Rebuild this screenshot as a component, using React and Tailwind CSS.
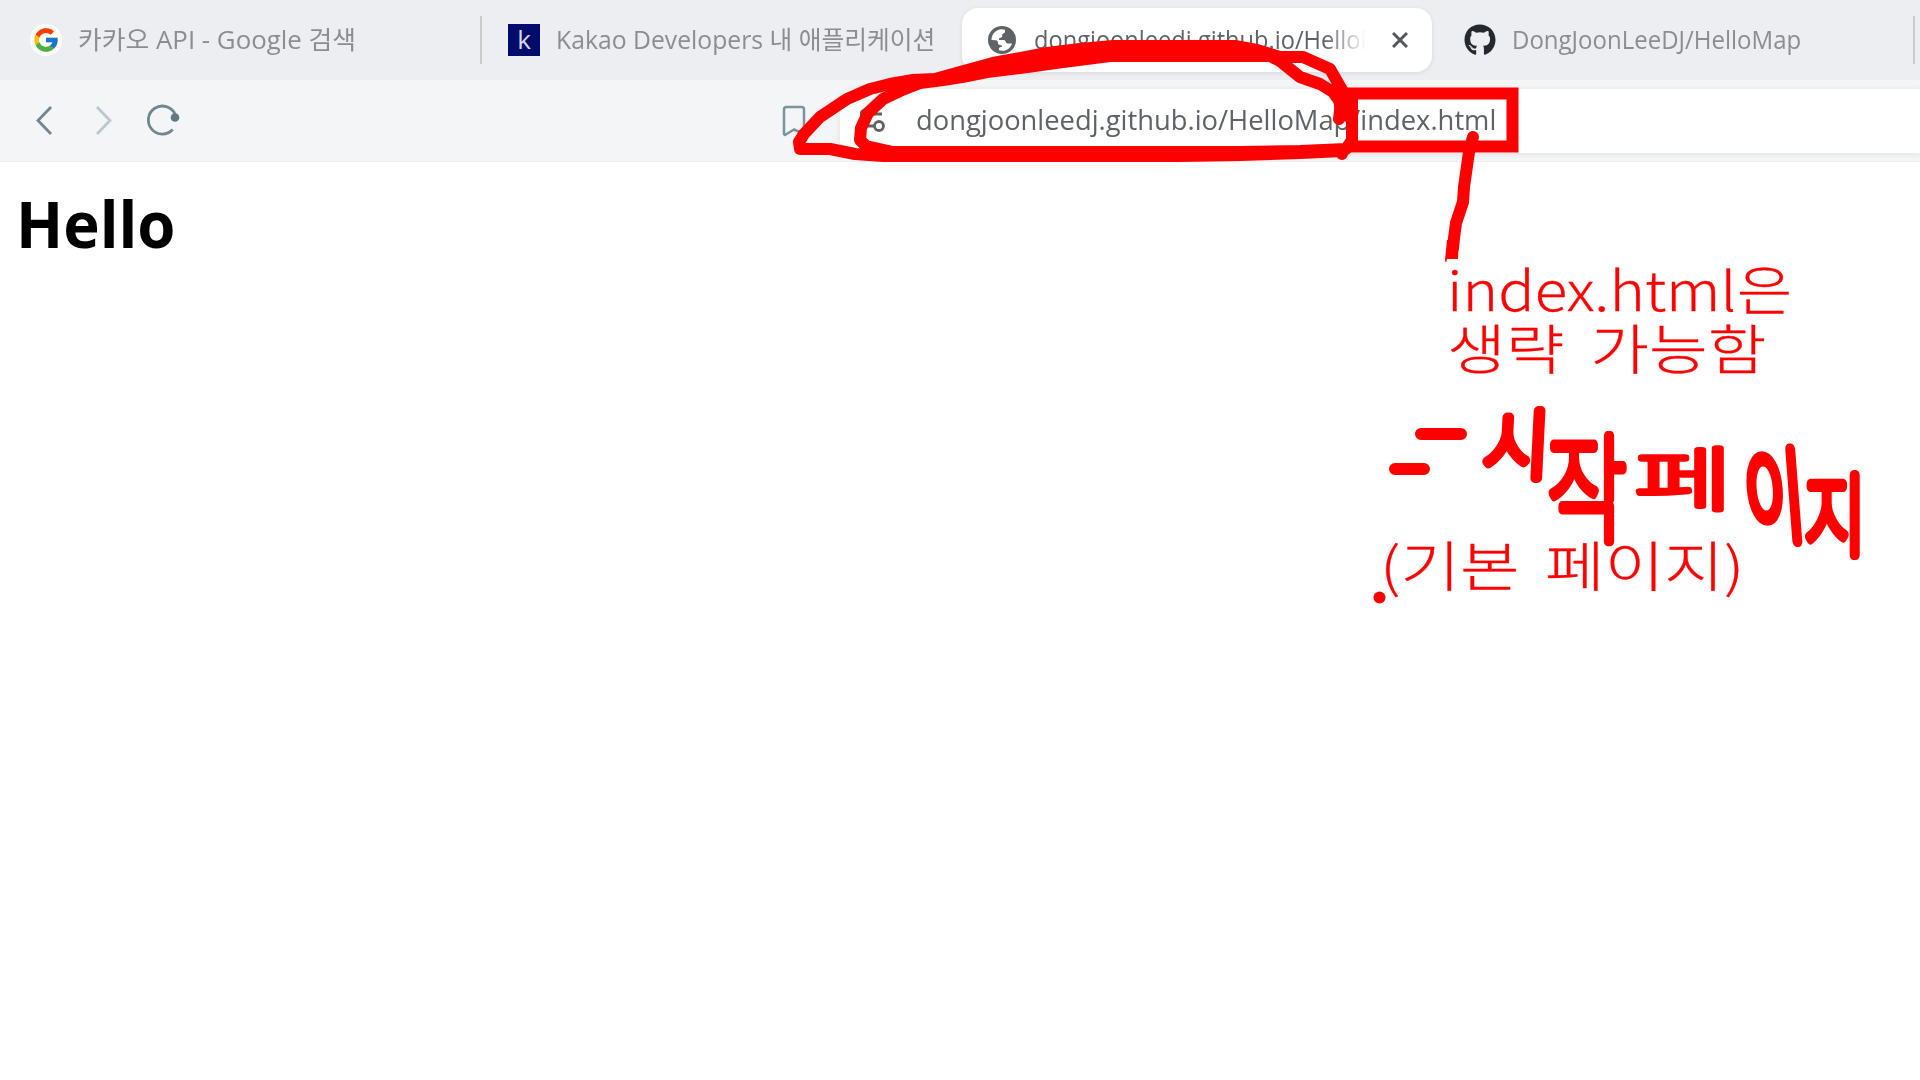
import { useLayoutEffect, useRef, useState } from "react";
import { FcGoogle } from "react-icons/fc";
import { FaGithub } from "react-icons/fa";

const UI_FONT = "font-['Open_Sans','Noto_Sans_CJK_KR',sans-serif]";
const NOTE_FONT = "font-['Noto_Sans_CJK_KR',sans-serif]";

// Single line of text that is scaled horizontally to take up exactly `width` pixels.
function FitText({ width, className = "", children }) {
  const ref = useRef(null);
  const [scale, setScale] = useState(1);
  useLayoutEffect(() => {
    setScale(width / ref.current.offsetWidth);
  }, [width]);
  return (
    <span className={`block shrink-0 whitespace-nowrap ${className}`} style={{ width }}>
      <span ref={ref} className="inline-block origin-left" style={{ transform: `scaleX(${scale})` }}>
        {children}
      </span>
    </span>
  );
}

function Divider() {
  return <span className="h-12 w-0.5 shrink-0 bg-[#c9cbcb]" />;
}

function GlobeIcon() {
  return (
    <svg viewBox="0 0 28 28" className="size-7 shrink-0">
      <circle cx="14" cy="14" r="14" fill="#5f6368" />
      <path
        d="M3.500 14C3.500 8 8 3.500 13.500 3.200L17 3.800V6C17 7.500 14.500 7 14.200 8.500V10.500C14 12 11 11.500 11 12.800V14H16C17.800 14 17.500 17.500 19.500 17.500H24C23 21.500 19 24.800 14.500 24.800L11 24.300V22C11.500 21 14 21.800 14 20.300C14 18.500 10 19.500 10 17.500C10 15.500 9.500 14.500 8 14.300Z"
        fill="#fff"
      />
    </svg>
  );
}

function TabBar() {
  return (
    <div className="flex h-20 items-center bg-[#edeef2] text-[25px] leading-none text-[#8b8d91]">
      <div className="flex w-[480px] shrink-0 items-center pl-[30px]">
        <span className="flex size-8 items-center justify-center rounded-full bg-white">
          <FcGoogle className="size-7" />
        </span>
        <FitText width={278} className="-mt-0.5 ml-4">카카오 API - Google 검색</FitText>
      </div>
      <Divider />
      <div className="flex w-[480px] shrink-0 items-center pl-[26px]">
        <span className="flex size-8 items-center justify-center bg-[#020d6b] pb-0.5 text-[26px] text-[#d5d7e6]">k</span>
        <FitText width={379} className="-mt-0.5 ml-4">Kakao Developers 내 애플리케이션</FitText>
      </div>
      <div className="flex h-16 w-[470px] shrink-0 items-center rounded-[16px] bg-white pl-[26px] text-[#5f6368] shadow-[0_1px_5px_rgba(0,0,0,0.09)]">
        <GlobeIcon />
        <div className="-mt-0.5 ml-[18px] w-[332px] shrink-0 overflow-hidden py-2 [mask-image:linear-gradient(to_right,#000_290px,transparent_332px)]">
          <FitText width={375}>dongjoonleedj.github.io/HelloMap</FitText>
        </div>
        <svg viewBox="0 0 16 16" className="ml-[26px] size-4 shrink-0" stroke="#54585c" strokeWidth="3">
          <path d="M1 1L15 15M15 1L1 15" />
        </svg>
      </div>
      <div className="flex w-[481px] shrink-0 items-center pl-8">
        <FaGithub className="size-8 text-[#24292f]" />
        <FitText width={289} className="-mt-0.5 ml-4">DongJoonLeeDJ/HelloMap</FitText>
      </div>
      <Divider />
    </div>
  );
}

function Toolbar() {
  return (
    <div className="flex h-[82px] items-center border-b border-[#eceeef] bg-[#f3f5f7]">
      <svg viewBox="0 0 190 40" className="h-10 w-[190px] shrink-0" fill="none" strokeWidth="2.800">
        <path d="M51 6L38 19.500L51 33" stroke="#708790" />
        <path d="M97 6L110 19.500L97 33" stroke="#bdc8cc" />
        <path d="M175 13A14 14 0 1 0 172.700 28.500" stroke="#708790" />
        <circle cx="175" cy="16.500" r="4.300" fill="#607982" />
      </svg>
      <svg viewBox="0 0 24 32" className="ml-[592px] h-8 w-6 shrink-0" fill="none" stroke="#7d939b" strokeWidth="2.500">
        <path d="M2 29V4.500Q2 2 4.500 2H19.500Q22 2 22 4.500V29L12 24.500L3 30Z" strokeLinejoin="round" />
      </svg>
      <div className="ml-[34px] flex h-16 flex-1 items-center rounded-l-xl bg-white pl-5 text-[#5f6368] shadow-[0_1px_6px_rgba(0,0,0,0.09)]">
        <svg viewBox="0 0 26 26" className="size-[26px] shrink-0" fill="none" stroke="#5f6368" strokeWidth="2.800">
          <circle cx="5" cy="6" r="4" />
          <path d="M11 6H22M3 18H15" />
          <circle cx="19" cy="18" r="4.500" />
        </svg>
        <FitText width={580} className="-mt-[3px] ml-[30px] text-[28px] leading-none">
          dongjoonleedj.github.io/HelloMap/index.html
        </FitText>
      </div>
    </div>
  );
}

// Pen marks and notes drawn on top of the browser window.
const STROKES = [
  "M1280 57L1257 50L1235 46H1113L1080 49L1047 53L993 63L960 72L935 79L913 80L890 84L870 89L847 99L820 117L804 134L799 142L800 149L830 149L855 154L883 156H1180L1240 155L1300 153L1342 151L1342 154",
  "M1339 119L1341 103L1333 92L1320 84L1300 77L1280 61L1270 56H1110L1063 62L1020 68L987 72L962 77L943 80L920 83L900 91L883 99L868 113L861 128L860 140L866 146L893 152H1180L1240 152L1300 151L1346 149L1352 140V120L1342 90L1330 69L1303 57H1275",
  "M1339 98L1341 112L1347 116V98M1421 434H1461M1395 469H1424",
  "M1473 137L1469 152L1464 187L1463 202L1456 223L1454 238L1453 248",
];

const HANDWRITING = [
  { ch: "시", x: 1487, y: 409, w: 60, h: 70, skew: -3, pen: 13 },
  { ch: "작", x: 1551, y: 433, w: 72, h: 109, skew: 0, pen: 8.5 },
  { ch: "페", x: 1640, y: 447, w: 88, h: 64, skew: 0, pen: 8 },
  { ch: "이", x: 1748, y: 447, w: 54, h: 95, skew: 7, pen: 12 },
  { ch: "지", x: 1808, y: 473, w: 55, h: 82, skew: 0, pen: 12 },
];

function InkLayer() {
  return (
    <div className="pointer-events-none absolute inset-0 text-[#ff0000]">
      <svg viewBox="0 0 1920 1080" className="absolute inset-0 size-full">
        <g fill="none" stroke="#f00" strokeWidth="12" strokeLinecap="round" strokeLinejoin="round">
          {STROKES.map((d) => (
            <path key={d} d={d} />
          ))}
          <path d="M1352 93.500H1512.500V146.500H1352Z" strokeLinejoin="miter" />
        </g>
        <path d="M1447 240H1459L1458 259H1447L1446 263L1445 260Z" fill="#f00" />
        <circle cx="1379.500" cy="597.500" r="6" fill="#f00" />
        <g fill="#f00" stroke="#f00" strokeLinejoin="round" fontSize="100" fontWeight="100" className={NOTE_FONT}>
          {HANDWRITING.map((g, i) => (
            <text
              key={i}
              strokeWidth={g.pen}
              transform={`translate(${g.x} ${g.y}) scale(${g.w / 83} ${g.h / 92}) translate(42 46) skewX(${g.skew}) translate(-47 38)`}
            >
              {g.ch}
            </text>
          ))}
        </g>
      </svg>
      <div className={`absolute left-[1447px] top-[259px] text-[54px] font-light leading-[57px] [-webkit-text-stroke:0.3px_#f00] ${NOTE_FONT}`}>
        <FitText width={345}>index.html은</FitText>
        <FitText width={319} className="relative top-0.5 [word-spacing:10px]">생략 가능함</FitText>
      </div>
      <div className={`absolute left-[1380px] top-[535px] text-[54px] font-light leading-[57px] [-webkit-text-stroke:0.3px_#f00] ${NOTE_FONT}`}>
        <FitText width={364} className="[word-spacing:9px]">(기본 페이지)</FitText>
      </div>
    </div>
  );
}

export default function App() {
  return (
    <div className={`relative h-[1080px] w-[1920px] overflow-hidden bg-white ${UI_FONT}`}>
      <TabBar />
      <Toolbar />
      <main className="pl-4 pt-[26px]">
        <h1 className="text-[64px] font-bold leading-[72px] text-black">
          <FitText width={159}>Hello</FitText>
        </h1>
      </main>
      <InkLayer />
    </div>
  );
}
